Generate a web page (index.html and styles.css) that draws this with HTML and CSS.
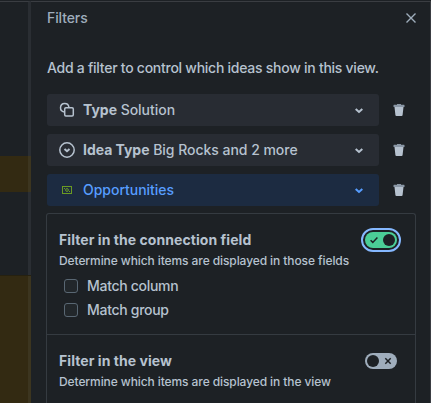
FILE: index.html
```html
<!DOCTYPE html>
<html lang="en">
<head>
  <meta charset="UTF-8" />
  <meta name="viewport" content="width=device-width, initial-scale=1.0" />
  <title>Filters</title>
  <link rel="stylesheet" href="styles.css">
</head>
<body>
  <div class="board">
    <div class="group group-short"></div>
    <div class="group group-tall"></div>
  </div>
  <div class="panel">
    <div class="panel-header">
      <h2>Filters</h2>
      <svg class="close" width="12" height="12" viewBox="0 0 12 12"><path d="M1.500 1.500l9 9M10.500 1.500l-9 9"/></svg>
    </div>
    <p class="intro">Add a filter to control which ideas show in this view.</p>

    <div class="filters">
      <div class="filter-row">
        <button class="filter">
          <svg class="icon" width="16" height="16" viewBox="0 0 16 16"><path d="M5.2 9.9A4.2 4.2 0 1 1 9.9 5.2"/><rect x="5.7" y="5.7" width="8.6" height="8.2" rx="1.2"/></svg>
          <span class="label"><b>Type</b> Solution</span>
          <svg class="chevron" width="10" height="8" viewBox="0 0 10 8"><path d="M1.700 2.900L5 5.900l3.300-3"/></svg>
        </button>
        <svg class="trash" width="12" height="12" viewBox="0 0 12 12"><path class="lid" d="M4 0h4v.8h3a.5.5 0 0 1 .5.5V3H.5V1.300A.5.5 0 0 1 1 .8h3z"/><path d="M1.500 3h9l-.9 8a1 1 0 0 1-1 .9H3.400a1 1 0 0 1-1-.9z"/></svg>
      </div>
      <div class="filter-row">
        <button class="filter">
          <svg class="icon" width="16" height="16" viewBox="0 0 16 16"><circle cx="8" cy="8" r="7.200"/><path class="thick" d="M5.500 7L8 9.200 10.500 7"/></svg>
          <span class="label"><b>Idea Type</b> Big Rocks and 2 more</span>
          <svg class="chevron" width="10" height="8" viewBox="0 0 10 8"><path d="M1.700 2.900L5 5.900l3.300-3"/></svg>
        </button>
        <svg class="trash" width="12" height="12" viewBox="0 0 12 12"><path class="lid" d="M4 0h4v.8h3a.5.5 0 0 1 .5.5V3H.5V1.300A.5.5 0 0 1 1 .8h3z"/><path d="M1.500 3h9l-.9 8a1 1 0 0 1-1 .9H3.400a1 1 0 0 1-1-.9z"/></svg>
      </div>
      <div class="filter-row">
        <button class="filter active">
          <svg class="icon money" width="16" height="16" viewBox="0 0 16 16"><rect x="3.500" y="4.500" width="9" height="7"/><circle cx="8" cy="8" r="1.400"/><path d="M5 6.500h1M10 9.500h1"/></svg>
          <span class="label">Opportunities</span>
          <svg class="chevron" width="10" height="8" viewBox="0 0 10 8"><path d="M1.700 2.900L5 5.900l3.300-3"/></svg>
        </button>
        <svg class="trash" width="12" height="12" viewBox="0 0 12 12"><path class="lid" d="M4 0h4v.8h3a.5.5 0 0 1 .5.5V3H.5V1.300A.5.5 0 0 1 1 .8h3z"/><path d="M1.500 3h9l-.9 8a1 1 0 0 1-1 .9H3.400a1 1 0 0 1-1-.9z"/></svg>
      </div>
    </div>

    <div class="card">
      <div class="section">
        <div class="section-head">
          <h3>Filter in the connection field</h3>
          <span class="toggle on">
            <svg width="10" height="10" viewBox="0 0 10 10"><path d="M1.600 5.200l2.200 2.200 4.600-4.900"/></svg>
            <span class="knob"></span>
          </span>
        </div>
        <p class="hint">Determine which items are displayed in those fields</p>
        <div class="check"><span class="box"></span><span>Match column</span></div>
        <div class="check"><span class="box"></span><span>Match group</span></div>
      </div>
      <div class="section">
        <div class="section-head">
          <h3>Filter in the view</h3>
          <span class="toggle">
            <span class="knob"></span>
            <svg width="10" height="10" viewBox="0 0 10 10"><path d="M2.300 2.300l5.400 5.400M7.700 2.300L2.300 7.700"/></svg>
          </span>
        </div>
        <p class="hint">Determine which items are displayed in the view</p>
      </div>
    </div>
  </div>
</body>
</html>
```

FILE: styles.css
```css
:root {
  --bg: #1d2125;
  --text: #b6c2cf;
  --subtle: #9fadbc;
  --line: #353b41;
}
* {
  box-sizing: border-box;
}
body {
  margin: 0;
  width: 431px;
  height: 403px;
  overflow: hidden;
  display: flex;
  background: var(--bg);
  color: var(--text);
  font-family: Inter, "Liberation Sans", sans-serif;
  font-size: 14px;
  line-height: 20px;
  border-top: 1px solid #1d2125;
}
h2, h3, p {
  margin: 0;
  white-space: nowrap;
}
svg {
  display: block;
  flex: none;
  fill: none;
  stroke: currentColor;
  stroke-width: 1.5;
}
.board {
  width: 31px;
  flex: none;
  border-top: 1px solid #3a3d42;
  border-right: 3px solid #2a2e33;
}
.group {
  width: 31px;
  background: linear-gradient(90deg, #332a12 28px, #3c351f 28px);
}
.group-short {
  height: 36px;
  margin-top: 154px;
}
.group-tall {
  height: 128px;
  margin-top: 83px;
  border-top: 1px solid #262110;
}
.panel {
  width: 400px;
  height: 402px;
  padding: 0 14px 0 16px;
  border-top: 1px solid #3a3d42;
  border-right: 1px solid #3a3d42;
}
.panel-header {
  display: flex;
  justify-content: space-between;
  align-items: center;
  height: 20px;
  margin-top: 6px;
  color: var(--subtle);
}
.panel-header h2 {
  font-size: 14px;
  font-weight: 500;
  letter-spacing: -0.1px;
}
.close {
  margin-right: -1px;
  stroke-width: 1.4;
}
.intro {
  margin-top: 30px;
  font-weight: 500;
  letter-spacing: -0.26px;
}
.filters {
  display: flex;
  flex-direction: column;
  gap: 8px;
  margin-top: 16px;
}
.filter-row {
  display: flex;
  align-items: center;
  gap: 14px;
}
.filter {
  width: 332px;
  height: 32px;
  display: flex;
  align-items: center;
  padding: 0 15px 0 12px;
  border: 0;
  border-radius: 3px;
  background: #282c33;
  color: var(--text);
  font: inherit;
}
.filter .label {
  flex: 1;
  margin-left: 8px;
  text-align: left;
  white-space: nowrap;
  font-weight: 500;
  letter-spacing: -0.03px;
}
.filter b {
  font-weight: 700;
}
.icon .thick {
  stroke-width: 2;
}
.chevron {
  stroke-width: 2;
}
.filter.active {
  background: #1c2b41;
  color: #579dff;
}
.money {
  color: #6a9a23;
  stroke-width: 1;
}
.trash {
  fill: #b6c2cf;
  stroke: none;
}
.trash .lid {
  fill: #8996a5;
}
.card {
  width: 370px;
  height: 190px;
  margin: 7px 0 0 -1px;
  border: 1px solid var(--line);
  border-bottom: 0;
  border-radius: 3px 3px 0 0;
  overflow: hidden;
}
.section {
  height: 120px;
  padding: 16px 18px 0 12px;
}
.section + .section {
  height: 69px;
  border-top: 1px solid var(--line);
}
.section-head {
  display: flex;
  justify-content: space-between;
  align-items: center;
  height: 20px;
}
.section h3 {
  font-size: 14px;
  font-weight: 700;
  letter-spacing: 0.06px;
}
.hint {
  margin-top: 1px;
  font-size: 12px;
  font-weight: 500;
  letter-spacing: -0.09px;
}
.section:first-child .hint {
  margin-bottom: 3px;
}
.toggle {
  width: 32px;
  height: 16px;
  display: flex;
  align-items: center;
  justify-content: space-between;
  padding: 0 4px 0 2px;
  border-radius: 8px;
  background: #9fadbc;
  color: var(--bg);
}
.toggle.on {
  padding: 0 2px 0 4px;
  background: #4bce97;
  outline: 2px solid #85b8ff;
  outline-offset: 2px;
}
.knob {
  width: 12px;
  height: 12px;
  border-radius: 50%;
  background: var(--bg);
}
.check {
  display: flex;
  align-items: center;
  height: 24px;
  padding-left: 5px;
  font-weight: 500;
  letter-spacing: -0.3px;
}
.box {
  width: 14px;
  height: 14px;
  margin-right: 9px;
  border: 1px solid #596773;
  border-radius: 3px;
  background: #22272b;
}
```
